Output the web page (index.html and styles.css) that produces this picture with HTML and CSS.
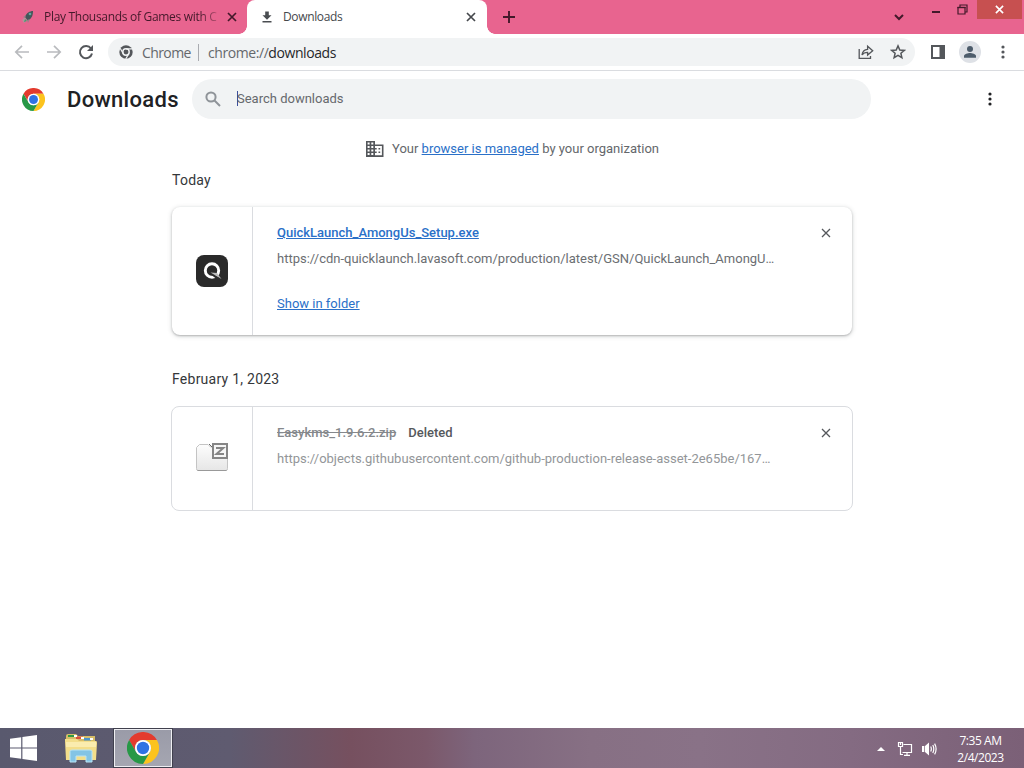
FILE: index.html
```html
<!DOCTYPE html>
<html lang="en">

<head>
  <meta charset="utf-8">
  <meta name="viewport" content="width=device-width, initial-scale=1">
  <title>Downloads</title>
  <link rel="stylesheet" href="styles.css">
</head>

<body>
  <svg class="defs">
    <defs>
      <symbol id="chrome" viewBox="0 0 48 48">
        <path fill="#e33b2e" d="M3.2 12A24 24 0 0 1 44.8 12H24A12 12 0 0 0 13.6 30z" />
        <path fill="#fcc31e" d="M44.8 12A24 24 0 0 1 24 48L34.4 30A12 12 0 0 0 24 12z" />
        <path fill="#279847" d="M24 48A24 24 0 0 1 3.2 12L13.6 30A12 12 0 0 0 34.4 30z" />
        <circle cx="24" cy="24" r="12" fill="#fff" />
        <circle cx="24" cy="24" r="9.3" fill="#2f72e4" />
      </symbol>
      <symbol id="close" viewBox="0 0 10 10">
        <path d="M1 1L9 9M9 1L1 9" fill="none" stroke="currentColor" />
      </symbol>
      <symbol id="dots" viewBox="0 0 4 14">
        <circle cx="2" cy="2" r="1.6" />
        <circle cx="2" cy="7" r="1.6" />
        <circle cx="2" cy="12" r="1.6" />
      </symbol>
    </defs>
  </svg>

  <header class="tabstrip">
    <div class="tab">
      <svg class="tab-icon" viewBox="0 0 16 16">
        <path d="M2 11L5 8L7 11L4 14z" fill="#b78f9d" />
        <path d="M5 8C6 4 10 2 13 2C13 6 12 9 8 12z" fill="#44575a" />
        <path d="M6 6L3 8L5 9zM10 10L8 14L7 11z" fill="#9a8089" />
        <circle cx="10" cy="5" r="1.3" fill="#5fa8a0" />
        <path d="M4 13L5 10L7 12z" fill="#4b9a70" />
      </svg>
      <span class="tab-title tab-title--faded">Play Thousands of Games with C</span>
      <svg class="tab-close"><use href="#close" /></svg>
    </div>
    <div class="tab tab--active">
      <svg class="tab-icon" viewBox="0 0 16 16">
        <path d="M6.2 2.5h3.6v3.7h2.7L8 10.7L3.5 6.2h2.7zM3.5 12h9v1.4h-9z" fill="#4a4d51" />
      </svg>
      <span class="tab-title">Downloads</span>
      <svg class="tab-close"><use href="#close" /></svg>
    </div>
    <svg class="new-tab" viewBox="0 0 12 12">
      <path d="M6 0V12M0 6H12" stroke="currentColor" stroke-width="1.9" />
    </svg>
    <div class="window-controls">
      <svg class="tab-search" viewBox="0 0 10 7">
        <path d="M1 1L5 5L9 1" fill="none" stroke="currentColor" stroke-width="2" />
      </svg>
      <svg class="minimize" viewBox="0 0 8 2"><path d="M0 0h8v2H0z" /></svg>
      <svg class="restore" viewBox="0 0 11 11">
        <path d="M1 3.5h7v6.5H1zM3 3V1h7v7H8" fill="none" stroke="currentColor" stroke-width="1.2" />
        <path d="M.4 2.8h8.2v1.4H.4z" />
      </svg>
      <div class="window-close"><svg viewBox="0 0 10 10"><use href="#close" /></svg></div>
    </div>
  </header>

  <nav class="toolbar">
    <svg class="nav-icon" viewBox="0 0 16 16">
      <path d="M15 8H2M8 1.8L1.8 8L8 14.2" />
    </svg>
    <svg class="nav-icon" viewBox="0 0 16 16">
      <path d="M1 8H14M8 1.8L14.2 8L8 14.2" />
    </svg>
    <svg class="nav-icon nav-icon--reload" viewBox="0 0 16 16">
      <path d="M13 4.5A6.1 6.1 0 1 0 14 9.6" />
      <path d="M15 1V7H9z" class="solid" />
    </svg>
    <div class="omnibox">
      <svg class="chrome-mono" viewBox="0 0 48 48">
        <circle cx="24" cy="24" r="23" fill="#54575b" />
        <circle cx="24" cy="24" r="11" fill="#54575b" stroke="#f1f3f4" stroke-width="5" />
        <path d="M24 13H45M14.5 29.5L4 11M33.5 29.5L23 48" stroke="#f1f3f4" stroke-width="4" />
      </svg>
      <span class="origin">Chrome</span>
      <span class="url">chrome://<b>downloads</b></span>
      <svg class="share" viewBox="0 0 16 16">
        <path d="M1.2 5V14.3H12.5V12M4 11C4.4 7.5 6.5 5.5 9.6 5.3V2.3L14.7 6.8L9.6 11V8.3C7 8.3 5.2 9.2 4 11z" />
      </svg>
      <svg class="star" viewBox="0 0 16 16">
        <path d="M8 1.9L9.8 6L14.3 6.4L10.9 9.3L11.9 13.7L8 11.4L4.1 13.7L5.1 9.3L1.7 6.4L6.2 6z" />
      </svg>
    </div>
    <svg class="side-panel" viewBox="0 0 14 14">
      <path d="M0 0h14v14H0zM2 2v10h6.5V2z" fill-rule="evenodd" />
    </svg>
    <svg class="avatar" viewBox="0 0 22 22">
      <circle cx="11" cy="11" r="11" fill="#dee1e6" />
      <circle cx="11" cy="8" r="3" />
      <path d="M5 16.8V15C5 13 9 12 11 12S17 13 17 15V16.8z" />
    </svg>
    <svg class="menu"><use href="#dots" /></svg>
  </nav>

  <main>
    <div class="page-header">
      <svg class="logo"><use href="#chrome" /></svg>
      <h1>Downloads</h1>
      <div class="search">
        <svg class="search-icon" viewBox="0 0 16 16">
          <circle cx="6" cy="6" r="4.6" />
          <path d="M9.5 9.5L15 15" />
        </svg>
        <span class="search-text">Search downloads</span>
      </div>
      <svg class="page-menu"><use href="#dots" /></svg>
    </div>

    <p class="managed">
      <svg viewBox="0 0 18 16">
        <path fill-rule="evenodd" d="M0 0h9v3.5h8.5V16H0zM1.6 1.6v1.8h2V1.6zM5.3 1.6v1.8h2V1.6zM1.6 5.1v1.8h2V5.1zM5.3 5.1v1.8h2V5.1zM1.6 8.6v1.8h2V8.6zM5.3 8.6v1.8h2V8.6zM1.6 12.1v2h2v-2zM5.3 12.1v2h2v-2zM9 5.1v1.8h1.7v1.7H9v1.8h1.7v1.7H9v2.2h6.9V5.1zM12.5 6.9h1.7v1.7h-1.7zM12.5 10.4h1.7v1.7h-1.7z" />
      </svg>
      <span>Your <a href="#">browser is managed</a> by your organization</span>
    </p>

    <section class="downloads">
      <h2>Today</h2>
      <article class="card card--active">
        <div class="file-icon">
          <svg width="32" height="32" viewBox="0 0 32 32">
            <rect width="32" height="32" rx="8" fill="#2a2a2a" />
            <circle cx="16" cy="15.5" r="6.7" fill="none" stroke="#fff" stroke-width="2.9" />
            <path d="M15.5 18.5L24 25" stroke="#2a2a2a" stroke-width="2.5" />
            <path d="M14.5 17.5L25.5 24L21 18z" fill="#bbb" />
          </svg>
        </div>
        <div class="details">
          <div class="title"><a class="name" href="#">QuickLaunch_AmongUs_Setup.exe</a></div>
          <div class="source">https://cdn-quicklaunch.lavasoft.com/production/latest/GSN/QuickLaunch_AmongU…</div>
          <div class="actions"><a href="#">Show in folder</a></div>
        </div>
        <svg class="remove"><use href="#close" /></svg>
      </article>

      <h2>February 1, 2023</h2>
      <article class="card card--deleted">
        <div class="file-icon">
          <svg width="34" height="30" viewBox="0 0 34 30">
            <defs>
              <linearGradient id="paper" x2="0" y2="1">
                <stop offset="0" stop-color="#fdfdfd" />
                <stop offset="1" stop-color="#e6e6e6" />
              </linearGradient>
            </defs>
            <path d="M1.5 5.5L4.5 2.5H13L15.5 5H31Q32.5 5 32.5 7V26.5Q32.5 28.5 31 28.5H3Q1.5 28.5 1.5 26.5z" fill="url(#paper)" stroke="#c4c4c4" />
            <path d="M2.5 28.5H31.5" stroke="#999" />
            <path d="M14 2L17 5" stroke="#666" />
            <rect x="18" y="2" width="14" height="14" fill="#f6f6f6" stroke="#868686" stroke-width="2" />
            <path d="M21 6H28.3L21.5 12H29" fill="none" stroke="#868686" stroke-width="2" />
          </svg>
        </div>
        <div class="details">
          <div class="title"><span class="name">Easykms_1.9.6.2.zip</span><span class="tag">Deleted</span></div>
          <div class="source">https://objects.githubusercontent.com/github-production-release-asset-2e65be/167…</div>
        </div>
        <svg class="remove"><use href="#close" /></svg>
      </article>
    </section>
  </main>

  <footer class="taskbar">
    <svg class="start" viewBox="0 0 27 26">
      <path d="M0 3.7L11.2 2.2V12.4H0zM12.4 2L27 0V12.4H12.4zM0 13.5H11.2V23.7L0 22.2zM12.4 13.5H27V26L12.4 23.9z" />
    </svg>
    <svg class="explorer" viewBox="0 0 34 30">
      <path d="M2 3Q2 1 4 1H12L14 3H31V8H2z" fill="#d6bd68" />
      <path d="M4 2h6v2H4z" fill="#2f9a42" />
      <path d="M12 3.5h7v2.5h-7z" fill="#d8503c" />
      <path d="M20 5h7v2.5h-7z" fill="#4d94c9" />
      <path d="M10 2h3v2h-3zM17 4h3v2h-3zM26 5h3v2h-3z" fill="#fff" />
      <path d="M1 6H13L15 8H32Q33 8 33 10L32 27H2L1 8z" fill="#f3de8a" />
      <path d="M2 9H32V14H2z" fill="#faecae" />
      <path d="M6 29V18.5Q6 17 8 17H26Q28 17 28 18.5V29H22V23H12V29z" fill="#83c4e5" stroke="#b9e4f5" />
    </svg>
    <div class="task-active"><svg><use href="#chrome" /></svg></div>
    <div class="tray">
      <svg class="tray-arrow" viewBox="0 0 8 4"><path d="M0 4L4 0L8 4z" /></svg>
      <svg class="network" viewBox="0 0 16 16">
        <path d="M6.5 3.5H14.5V11.5H5.5M3.5 6V13.5H6M10 11.5V14M7 14.3H13M1.5 1.5H5.5V5.5H1.5z" />
        <path d="M3.5 1.5V4" />
      </svg>
      <svg class="volume" viewBox="0 0 16 16">
        <path class="solid" d="M1 5H3.3V11H1zM4 5L8 1.5V14.5L4 11z" />
        <path d="M9.7 5.5Q11 8 9.7 10.5M11.8 4Q13.8 8 11.8 12M13.6 2.6Q16.6 8 13.6 13.4" />
      </svg>
    </div>
    <div class="clock">
      <div>7:35 AM</div>
      <div>2/4/2023</div>
    </div>
  </footer>
</body>

</html>
```
FILE: styles.css
```css
:root {
  --frame: #e8648f;
  --frame-ink: #43192a;
  --field: #f1f3f4;
  --icon: #54575b;
  --link: #2a70c8;
  --line: #dadce0;
  --ui-font: "Open Sans", "Noto Sans", sans-serif;
}

* {
  box-sizing: border-box;
}

body {
  display: flex;
  flex-direction: column;
  height: 768px;
  margin: 0;
  overflow: hidden;
  background: #fff;
  font: 13px/20px Roboto, sans-serif;
}

svg {
  display: block;
  flex: none;
}

h1,
h2,
p {
  margin: 0;
  font-weight: 400;
}

a {
  color: var(--link);
}

.defs {
  position: absolute;
  width: 0;
  height: 0;
}

/* Tab strip */

.tabstrip {
  display: flex;
  flex: none;
  height: 34px;
  background: var(--frame);
  color: var(--frame-ink);
  font: 12px/16px var(--ui-font);
}

.tab {
  display: flex;
  align-items: center;
  width: 247px;
  padding: 0 10px 0 20px;
}

.tab--active {
  position: relative;
  width: 240px;
  padding: 0 11px 0 12px;
  border-radius: 8px 8px 0 0;
  background: #fff;
  color: #45484c;
}

/* curved feet of the active tab */
.tab--active::before,
.tab--active::after {
  content: "";
  position: absolute;
  bottom: 0;
  width: 8px;
  height: 8px;
}

.tab--active::before {
  left: -8px;
  background: radial-gradient(circle at 0 0, var(--frame) 7.5px, #fff 8px);
}

.tab--active::after {
  right: -8px;
  background: radial-gradient(circle at 100% 0, var(--frame) 7.5px, #fff 8px);
}

.tab-icon {
  width: 16px;
  height: 16px;
  margin-right: 8px;
}

.tab-title {
  flex: 1;
  overflow: hidden;
  letter-spacing: -0.36px;
  white-space: nowrap;
}

.tab-title--faded {
  letter-spacing: -0.3px;
  -webkit-mask-image: linear-gradient(to right, #000 155px, transparent 180px);
  mask-image: linear-gradient(to right, #000 155px, transparent 180px);
}

.tab-close {
  width: 10px;
  height: 10px;
  stroke-width: 1.7;
}

.new-tab {
  width: 12px;
  height: 12px;
  margin: 11px 0 0 16px;
}

.window-controls {
  display: flex;
  margin-left: auto;
}

.tab-search {
  width: 10px;
  height: 7px;
  margin: 14px 28px 0 0;
}

.minimize {
  width: 8px;
  height: 2px;
  margin: 11px 17px 0 0;
}

.restore {
  width: 11px;
  height: 11px;
  margin: 4px 9px 0 0;
}

.minimize,
.restore {
  fill: currentColor;
}

.window-close {
  display: flex;
  align-items: center;
  justify-content: center;
  width: 45px;
  height: 19px;
  margin-right: 2px;
  background: #c75050;
  color: #fff;
}

.window-close svg {
  width: 9px;
  height: 9px;
  stroke-width: 1.8;
}

/* Toolbar */

.toolbar {
  display: flex;
  flex: none;
  align-items: center;
  height: 37px;
  padding: 0 19px 0 14px;
  border-bottom: 1px solid var(--line);
  font: 14px/20px var(--ui-font);
}

.nav-icon {
  width: 16px;
  height: 16px;
  margin-right: 16px;
  fill: none;
  stroke: #b9bbbe;
  stroke-width: 1.7;
}

.nav-icon--reload {
  margin-right: 14px;
  stroke: var(--icon);
  stroke-width: 2;
}

.nav-icon--reload .solid {
  fill: var(--icon);
  stroke: none;
}

.omnibox {
  display: flex;
  align-items: center;
  width: 807px;
  height: 28px;
  padding: 0 9px 0 11px;
  border-radius: 14px;
  background: var(--field);
  color: #65686c;
}

.chrome-mono {
  width: 14px;
  height: 14px;
}

.origin {
  width: 57px;
  margin-left: 9px;
  border-right: 1px solid #a9abb0;
  line-height: 16px;
  letter-spacing: -0.6px;
}

.url {
  margin-left: 9px;
  letter-spacing: -0.43px;
}

.origin,
.url {
  padding-top: 1px;
}

.url b {
  color: #26282b;
  font-weight: 400;
}

.share,
.star {
  width: 16px;
  height: 16px;
  fill: none;
  stroke: var(--icon);
  stroke-width: 1.3;
}

.share {
  margin-left: auto;
}

.star {
  margin-left: 16px;
  stroke-width: 1.5;
}

.side-panel {
  width: 14px;
  height: 14px;
  margin-left: 16px;
  fill: var(--icon);
}

.avatar {
  width: 22px;
  height: 22px;
  margin-left: 14px;
  fill: #4d5c6b;
}

.menu {
  width: 4px;
  height: 14px;
  margin-left: 20px;
  fill: var(--icon);
}

/* Downloads page */

main {
  flex: 1;
}

.page-header {
  display: flex;
  align-items: center;
  height: 56px;
  padding: 0 32px 0 22px;
}

.logo {
  width: 23px;
  height: 23px;
}

.page-header h1 {
  width: 125px;
  margin-left: 22px;
  padding-top: 1px;
  color: #202124;
  font-size: 22px;
  font-weight: 500;
  letter-spacing: 0.3px;
}

.search {
  display: flex;
  align-items: center;
  width: 679px;
  height: 40px;
  padding-left: 13px;
  border-radius: 20px;
  background: var(--field);
  color: #66696d;
}

.search-icon {
  width: 16px;
  height: 16px;
  margin-right: 16px;
  fill: none;
  stroke: #8f9499;
  stroke-width: 2;
}

.search-text {
  margin-bottom: 1px;
  border-left: 1px solid #3c4f9c;
  line-height: 15px;
  text-indent: -1px;
}

.page-menu {
  width: 4px;
  height: 14px;
  margin-left: auto;
  fill: #202124;
}

.managed {
  display: flex;
  align-items: center;
  justify-content: center;
  height: 43px;
  padding-left: 1px;
  color: #64676b;
}

.managed svg {
  width: 18px;
  height: 16px;
  margin-right: 8px;
  fill: var(--icon);
}

.downloads {
  width: 682px;
  margin: 0 auto;
}

.downloads h2 {
  height: 36px;
  padding-left: 1px;
  color: #35373a;
  font-size: 14px;
  letter-spacing: 0.25px;
}

.card {
  display: flex;
  border-radius: 8px;
}

.card--active {
  height: 128px;
  margin: 1px 1px 34px;
  box-shadow: 0 1px 2px rgba(60, 64, 67, 0.3), 0 1px 4px 1px rgba(60, 64, 67, 0.15);
}

.file-icon {
  display: flex;
  align-items: center;
  justify-content: center;
  width: 81px;
  border-right: 1px solid var(--line);
}

.details {
  flex: 1;
  padding: 16px 0 0 24px;
  white-space: nowrap;
}

.name {
  font-weight: 500;
}

.source {
  margin-top: 6px;
  color: #6b6e72;
}

.actions {
  margin-top: 25px;
}

.remove {
  width: 10px;
  height: 10px;
  margin: 21px 21px 0 0;
  color: #55585c;
  stroke-width: 1.3;
}

.card--deleted {
  height: 105px;
  margin-top: 1px;
  border: 1px solid var(--line);
}

.card--deleted .file-icon {
  padding-bottom: 3px;
}

.card--deleted .name {
  color: #85888c;
  text-decoration: line-through;
}

.card--deleted .tag {
  margin-left: 12px;
  color: #55585c;
  font-weight: 500;
}

.card--deleted .source {
  color: #939699;
}

/* Taskbar */

.taskbar {
  display: flex;
  flex: none;
  align-items: center;
  height: 40px;
  padding-left: 10px;
  background: linear-gradient(to right, #59596e 0, #5f5b70 230px, #76505f 350px, #7b586a 425px, #7d657c 475px, #877084 590px, #897287 700px, #846b82 850px, #7b6077 1024px);
  color: #fff;
}

.start {
  width: 27px;
  height: 26px;
  fill: #fff;
}

.explorer {
  width: 34px;
  height: 30px;
  margin-left: 27px;
}

.task-active {
  display: flex;
  align-items: center;
  justify-content: center;
  width: 58px;
  height: 38px;
  margin-left: 16px;
  border: 1px solid #eeeef2;
  outline: 1px solid #40404e;
  background: linear-gradient(#9a9ba8, #a5a6b1);
}

.task-active svg {
  width: 32px;
  height: 32px;
}

.tray {
  display: flex;
  align-items: center;
  margin-left: auto;
  padding-top: 1px;
  fill: none;
  stroke: #fff;
  stroke-width: 1.2;
}

.tray-arrow {
  width: 8px;
  height: 4px;
  margin-right: 12px;
  fill: #fff;
  stroke: none;
}

.network,
.volume {
  width: 16px;
  height: 16px;
}

.volume {
  margin-left: 8px;
}

.volume .solid {
  fill: #fff;
  stroke: none;
}

.clock {
  width: 87px;
  padding-top: 2px;
  font: 12px/17px var(--ui-font);
  letter-spacing: -0.45px;
  text-align: center;
}
```
